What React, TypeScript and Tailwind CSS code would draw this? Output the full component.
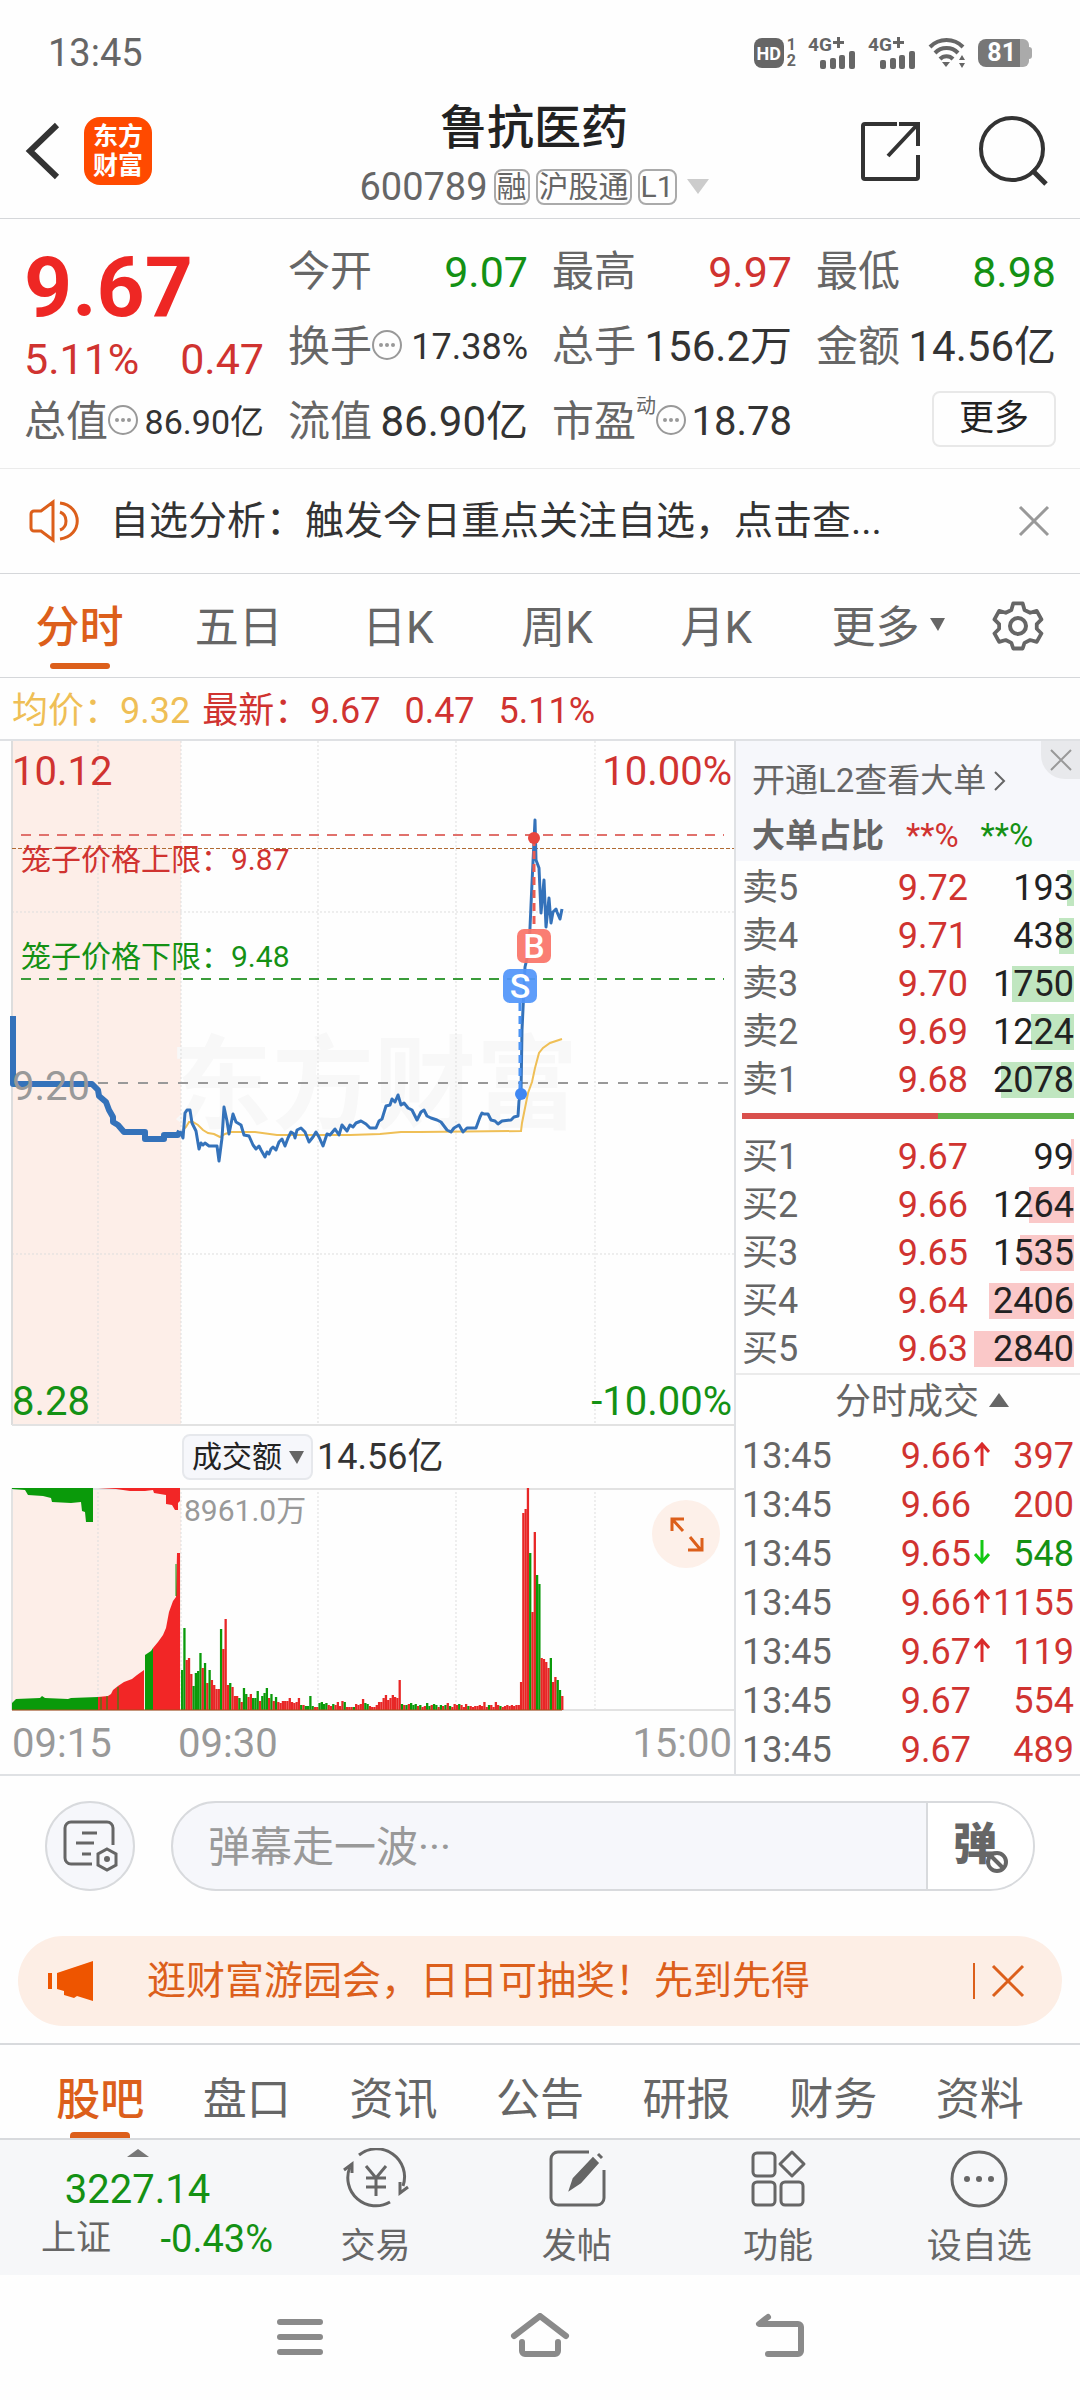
import { useState } from "react";
import clsx from "clsx";

const UP = "text-[#d03330]";
const DOWN = "text-[#149114]";

const chartTabs = ["分时", "五日", "日K", "周K", "月K", "更多"];
const infoTabs = ["股吧", "盘口", "资讯", "公告", "研报", "财务", "资料"];

const asks = [
  { label: "卖5", price: "9.72", qty: 193 },
  { label: "卖4", price: "9.71", qty: 438 },
  { label: "卖3", price: "9.70", qty: 1750 },
  { label: "卖2", price: "9.69", qty: 1224 },
  { label: "卖1", price: "9.68", qty: 2078 },
];

const bids = [
  { label: "买1", price: "9.67", qty: 99 },
  { label: "买2", price: "9.66", qty: 1264 },
  { label: "买3", price: "9.65", qty: 1535 },
  { label: "买4", price: "9.64", qty: 2406 },
  { label: "买5", price: "9.63", qty: 2840 },
];

const trades = [
  { time: "13:45", price: "9.66", dir: "up", qty: 397 },
  { time: "13:45", price: "9.66", dir: "", qty: 200 },
  { time: "13:45", price: "9.65", dir: "down", qty: 548 },
  { time: "13:45", price: "9.66", dir: "up", qty: 1155 },
  { time: "13:45", price: "9.67", dir: "up", qty: 119 },
  { time: "13:45", price: "9.67", dir: "", qty: 554 },
  { time: "13:45", price: "9.67", dir: "", qty: 489 },
];

const auctionLine =
  "13,275 13,343 92,343 98,349 99,355 106,361 109,369 113,376 113,381 118,384 124,391 145,391 145,398 164,398 164,394 178,394 180,390";

const priceLine =
  "180,390 183,397 185,372 187,369 190,369 192,382 196,390 199,408 201,402 203,404 205,402 209,405 217,405 219,420 222,397 224,366 227,380 229,393 233,373 236,381 241,384 244,394 249,395 253,404 256,408 259,405 261,409 265,416 267,411 269,413 271,408 273,406 276,409 279,401 282,398 285,405 288,397 291,391 294,393 295,397 297,389 301,387 305,391 309,401 313,396 316,391 319,396 323,405 327,393 330,394 335,388 339,394 342,384 347,390 350,384 353,386 356,382 361,380 366,383 370,387 376,387 379,380 382,378 386,365 390,364 392,358 395,361 398,354 401,364 404,362 408,367 412,369 417,379 421,371 424,369 427,375 431,377 437,379 441,381 447,389 451,391 454,387 459,384 463,391 467,387 476,387 480,376 482,372 484,373 488,373 491,379 495,380 498,383 502,380 511,379 514,376 518,375 519,360 521,352 522,289 525,226 529,209 532,142 535,79 536,119 539,127 541,172 544,139 546,186 549,157 551,182 553,171 556,168 557,171 560,178 562,168";

const averageLine =
  "183,389 186,386 189,381 193,381 198,384 203,389 208,392 214,393 220,396 225,393 231,391 255,391 277,394 300,394 350,394 380,393 401,391 420,391 521,390 522,382 528,352 532,341 535,327 539,312 543,307 550,302 562,298";

// one bar per minute from 09:30, negative = falling minute
const volumes = [
  -40, -82, 50, 52, 36, -24, -37, -39, -57, 42, -47, 27, -40, 30, 25, 21, 21, -81, 61, 91,
  25, -27, 23, 14, 14, -12, 8, -22, -16, 13, 16, -12, -12, -19, 9, -14, -17, -22, 12, -16,
  9, -13, 8, 7, 9, 9, 9, 12, 8, 7, 8, 12, -5, 5, -4, -4, -14, -4, 3, 3,
  -7, -8, -6, -7, 5, 4, -6, 5, 8, 4, 9, -8, 3, 3, 3, -3, 6, 5, 6, 11,
  -7, -6, 4, 3, 3, 5, 8, 8, 12, 15, 10, 12, 15, 13, 12, 30, -6, 5, -5, 6,
  -7, -5, -6, 4, -5, 3, 4, -7, -4, 5, -6, -5, 3, -5, 4, -5, 7, -4, 3, 6,
  5, -6, 5, 3, 6, -4, 4, 3, 4, 4, 5, 4, 8, 3, -5, 5, 3, 8, 5, -4,
  3, 4, 5, 4, 5, 4, 5, 5, 28, 197, 201, 222, -157, 98, 178, -135, -126, 52, 51, 48,
  42, -52, 28, 33, -30, -20, 14,
];

function StatusBar() {
  return (
    <div className="flex h-[88px] items-center justify-between pt-[18px] pr-12 pl-12 text-[#666]">
      <span className="text-[38px] leading-10">13:45</span>
      <div className="flex items-center gap-3">
        <div className="flex items-center gap-[3px]">
          <span className="flex h-[30px] w-[30px] shrink-0 items-center justify-center rounded-lg bg-[#666] text-[18px] font-bold text-white">HD</span>
          <span className="flex flex-col text-[16px] leading-4 font-bold">
            <span>1</span>
            <span>2</span>
          </span>
        </div>
        {[0, 1].map((sim) => (
          <div key={sim} className="relative h-8 w-12">
            <span className="absolute -top-1 left-0 text-[19px] leading-6 font-bold">4G</span>
            <svg viewBox="0 0 48 32" className="h-8 w-12" fill="#666">
              <path d="M29 0h3v4h4v3h-4v4h-3V7h-4V4h4z" />
              <rect x="12" y="23" width="6" height="9" rx="2" />
              <rect x="22" y="21" width="6" height="11" rx="2" />
              <rect x="31" y="18" width="6" height="14" rx="2" />
              <rect x="41" y="14" width="6" height="18" rx="2" />
            </svg>
          </div>
        ))}
        <svg viewBox="0 0 38 30" className="h-[30px] w-[38px]" fill="none" stroke="#666" strokeWidth="4">
          <path d="M2 9a23 23 0 0 1 33 0" />
          <path d="M7 15a16 16 0 0 1 23 0" />
          <path d="M12 21a9 9 0 0 1 13 0" />
          <path d="M18 29l-4-5h8z" fill="#666" stroke="none" />
          <path d="M34 17l3 5h-6zM34 30l3-5h-6z" fill="#666" stroke="none" />
        </svg>
        <div className="flex items-center">
          <span className="flex h-7 w-[42px] items-center justify-end rounded-l-lg bg-[#777] pr-1 text-[25px] font-bold text-white">81</span>
          <span className="h-7 w-[9px] rounded-r-md bg-[#aaa]" />
          <span className="h-3 w-[3px] rounded-r bg-[#aaa]" />
        </div>
      </div>
    </div>
  );
}

function Header() {
  return (
    <header className="flex h-[131px] items-center justify-between border-b border-[#d5d7da] px-6">
      <div className="flex flex-1 items-center gap-6 pb-1">
        <button aria-label="返回">
          <svg viewBox="0 0 36 58" className="h-[58px] w-9" fill="none" stroke="#333" strokeWidth="6">
            <path d="M33 3L6 29l27 26" />
          </svg>
        </button>
        <span className="flex h-[68px] w-[68px] flex-col items-center justify-center rounded-2xl bg-[#ff4a00] text-[25px] leading-[29px] font-bold text-white">
          <span>东方</span>
          <span>财富</span>
        </span>
      </div>
      <div className="flex flex-col items-center gap-[11px]">
        <h1 className="text-[47px] leading-[56px] font-medium text-[#222]">鲁抗医药</h1>
        <div className="flex items-center gap-[6px] text-[#666]">
          <span className="text-[38px] leading-10">600789</span>
          <span className="rounded-lg border-2 border-[#aaa] px-px text-[30px] leading-8">融</span>
          <span className="rounded-lg border-2 border-[#aaa] px-px text-[30px] leading-8">沪股通</span>
          <span className="rounded-lg border-2 border-[#aaa] px-px text-[30px] leading-8">L1</span>
          <svg viewBox="0 0 22 15" className="ml-1 h-[15px] w-[22px]" fill="#ccc">
            <path d="M0 0h22L11 15z" />
          </svg>
        </div>
      </div>
      <div className="flex flex-1 items-center justify-end gap-14 pr-2 pb-1 pl-1">
        <button aria-label="分享">
          <svg viewBox="0 0 62 62" className="h-[62px] w-[62px]" fill="none" stroke="#333" strokeWidth="4">
            <path d="M37 4H5a2 2 0 0 0-2 2v51a2 2 0 0 0 2 2h51a2 2 0 0 0 2-2V35" />
            <path d="M39 4h19v22M57 5L28 36" />
          </svg>
        </button>
        <button aria-label="搜索">
          <svg viewBox="0 0 70 70" className="h-[70px] w-[70px]" fill="none" stroke="#333" strokeWidth="4">
            <circle cx="34" cy="33" r="31" />
            <path d="M54 54l14 14" strokeWidth="5" />
          </svg>
        </button>
      </div>
    </header>
  );
}

function MoreDot() {
  return (
    <svg viewBox="0 0 30 30" className="mb-1 h-[30px] w-[30px] shrink-0" fill="#999">
      <circle cx="15" cy="15" r="14" fill="none" stroke="#999" strokeWidth="2" />
      <circle cx="9" cy="15" r="2" />
      <circle cx="15" cy="15" r="2" />
      <circle cx="21" cy="15" r="2" />
    </svg>
  );
}

type StatProps = { label: string; value: string; tone?: string; dot?: boolean; sup?: string; size?: string };

function Stat({ label, value, tone = "text-[#333]", dot, sup, size = "text-[42px]" }: StatProps) {
  return (
    <div className="flex h-[75px] items-center justify-between pt-[2px] whitespace-nowrap">
      <span className="flex items-center text-[42px] leading-[48px] text-[#666]">
        {label}
        {sup && <span className="self-start text-[20px] leading-4">{sup}</span>}
        {dot && <MoreDot />}
      </span>
      <span className={clsx(size, "leading-[48px]", tone)}>{value}</span>
    </div>
  );
}

function Quote() {
  return (
    <section className="grid grid-cols-4 gap-x-6 border-b border-[#ebebeb] px-6 pt-[14px] pb-[10px]">
      <div className="row-span-3">
        <div className="h-[102px] pt-1 text-[84px] leading-[102px] font-bold text-[#ee2724]">9.67</div>
        <div className={clsx("flex h-12 items-center justify-between text-[43px]", UP)}>
          <span>5.11%</span>
          <span>0.47</span>
        </div>
        <Stat label="总值" value="86.90亿" dot size="text-[34px]" />
      </div>
      <Stat label="今开" value="9.07" tone={DOWN} size="text-[43px]" />
      <Stat label="最高" value="9.97" tone={UP} size="text-[43px]" />
      <Stat label="最低" value="8.98" tone={DOWN} size="text-[43px]" />
      <Stat label="换手" value="17.38%" dot size="text-[36px]" />
      <Stat label="总手" value="156.2万" />
      <Stat label="金额" value="14.56亿" />
      <Stat label="流值" value="86.90亿" />
      <Stat label="市盈" value="18.78" sup="动" dot size="text-[40px]" />
      <div className="flex items-center justify-end pb-1">
        <button className="h-14 w-[124px] rounded-lg border-2 border-[#e8e8e8] text-[35px] leading-[48px] text-[#222]">更多</button>
      </div>
    </section>
  );
}

function Notice() {
  return (
    <div className="flex h-[105px] items-center border-b border-[#d5d7da] pr-[30px] pl-7">
      <svg viewBox="0 0 54 44" className="h-11 w-[54px]" fill="none" stroke="#dc5f1b" strokeWidth="3">
        <path d="M25 3v38L13 32H6a3 3 0 0 1-3-3V15a3 3 0 0 1 3-3h7z" />
        <path d="M32 13c8 3 8 15 0 18M32 4c23 3 23 33 0 36" />
      </svg>
      <p className="ml-7 flex-1 truncate text-[39px] leading-[48px] text-[#333]">自选分析：触发今日重点关注自选，点击查...</p>
      <button aria-label="关闭提示">
        <svg viewBox="0 0 32 32" className="h-8 w-8" fill="none" stroke="#999" strokeWidth="3">
          <path d="M2 2l28 28M30 2L2 30" />
        </svg>
      </button>
    </div>
  );
}

function ChartTabs() {
  const [active, setActive] = useState("分时");
  return (
    <nav className="flex h-[104px] items-center border-b border-[#d5d7da]">
      {chartTabs.map((tab) => (
        <button
          key={tab}
          onClick={() => setActive(tab)}
          className={clsx("relative h-full flex-1 pt-1 text-[44px]", tab === active ? "font-medium text-[#dc5f1b]" : "text-[#666]")}
        >
          {tab}
          {tab === "更多" && (
            <svg viewBox="0 0 15 13" className="absolute top-[44px] right-[10px] h-[13px] w-[15px]" fill="#666">
              <path d="M0 0h15L8 13z" />
            </svg>
          )}
          {tab === active && <span className="absolute bottom-2 left-1/2 h-[6px] w-[60px] -translate-x-1/2 rounded bg-[#dc5f1b]" />}
        </button>
      ))}
      <button aria-label="设置" className="flex w-[125px] justify-center">
        <svg viewBox="0 0 52 52" className="h-[52px] w-[52px]" fill="none" stroke="#666" strokeWidth="4" strokeLinejoin="round">
          <path d="M21 2h10l2 7 6 3 7-2 5 9-5 5v5l5 5-5 9-7-2-6 3-2 6H21l-2-6-6-3-7 2-5-9 5-5v-5l-5-5 5-9 7 2 6-3z" transform="translate(1.5 1.5) scale(.94)" />
          <circle cx="26" cy="26" r="8" />
        </svg>
      </button>
    </nav>
  );
}

function PriceChart() {
  return (
    <svg viewBox="0 0 734 685" className="h-auto w-full" fill="none">
      <rect x="12" y="0" width="169" height="684" fill="#fdeee8" />
      <text x="170" y="380" fontSize="102" fontWeight="700" fill="#f8f8f8">东方财富</text>
      <g stroke="#ddd" strokeWidth="1" strokeDasharray="2 2">
        <path d="M98 0v684M181 0v684M318 0v684M456 0v684M595 0v684" />
        <path d="M12 171h722M12 513h722" />
      </g>
      <path d="M12 0v684" stroke="#ddd" strokeWidth="2" />
      <path d="M12 684h722" stroke="#e2e2e2" strokeWidth="2" />
      <path d="M98 342h636" stroke="#999" strokeWidth="2" strokeDasharray="10 10" />
      <path d="M21 94h703" stroke="#e0716c" strokeWidth="2" strokeDasharray="10 8" />
      <path d="M12 107.5h722" stroke="#b06a33" strokeWidth="1" strokeDasharray="4 2" />
      <path d="M21 238h703" stroke="#3a9c3a" strokeWidth="2" strokeDasharray="10 8" />

      <polyline points={averageLine} stroke="#efbf56" strokeWidth="2" />
      <polyline points={auctionLine} stroke="#3472ba" strokeWidth="6" strokeLinejoin="round" />
      <polyline points={priceLine} stroke="#3472ba" strokeWidth="3" strokeLinejoin="round" />

      <path d="M534 97v92" stroke="#ea5c52" strokeWidth="3" strokeDasharray="8 5" />
      <circle cx="534" cy="97" r="6" fill="#e8463f" />
      <path d="M520 262v91" stroke="#4b94f5" strokeWidth="3" strokeDasharray="8 5" />
      <circle cx="521" cy="353" r="6" fill="#3f87f3" />
      <rect x="517" y="188" width="34" height="34" rx="7" fill="#fa7468" fillOpacity=".93" />
      <text x="534" y="217" fontSize="34" fontWeight="500" textAnchor="middle" fill="#fff">B</text>
      <rect x="503" y="228" width="34" height="34" rx="7" fill="#5296fa" fillOpacity=".93" />
      <text x="520" y="257" fontSize="34" fontWeight="500" textAnchor="middle" fill="#fff">S</text>

      <g fontSize="40">
        <text x="12" y="44" fill="#d03330">10.12</text>
        <text x="732" y="44" fill="#d03330" textAnchor="end">10.00%</text>
        <text x="12" y="359" fill="#999">9.20</text>
        <text x="12" y="674" fill="#149114">8.28</text>
        <text x="732" y="674" fill="#149114" textAnchor="end">-10.00%</text>
      </g>
      <text x="21" y="129" fontSize="30" fill="#d03330">笼子价格上限：9.87</text>
      <text x="21" y="226" fontSize="30" fill="#149114">笼子价格下限：9.48</text>
    </svg>
  );
}

function VolumeChart() {
  return (
    <svg viewBox="0 0 734 223" className="h-auto w-full" fill="none">
      <rect x="12" y="0" width="169" height="222" fill="#fdeee8" />
      <path d="M98 0v222M181 0v222M318 0v222M456 0v222M595 0v222" stroke="#ddd" strokeDasharray="2 2" />
      <path d="M12 0v222M12 1h722M12 222h722" stroke="#e2e2e2" strokeWidth="2" />

      {/* call auction: matched volume below, unmatched hanging from the top */}
      <path d="M12 222v-7l4-4 24-1 2-2 3 2 23 1 3-1 27-1v13z" fill="#0a9a0a" />
      <path d="M98 222v-13l10-1 3-2 2-4 5-4 6-4 8-3 5-4 7-5v40z" fill="#f22626" />
      <path d="M145 222v-55l6-4 2-3v62z" fill="#0a9a0a" />
      <path d="M153 222v-62l5-6 5-7 3-7 3-16 4-11 3-4 1-44h3v157z" fill="#f22626" />
      <path d="M101 222v-13M107 222v-14M118 222v-23" stroke="#0a9a0a" strokeWidth="1" />
      <path d="M176 108v-32" stroke="#0a9a0a" strokeWidth="1" />
      <path d="M12 0h81v34h-7l-1-10-3-1-1-9-10 1-19-1-1-4-8-2-15-1-3-5-13-1z" fill="#0a9a0a" />
      <path d="M98 0h82v13l-2 2v7h-3l-3-5-6-1v-9l-6-1-6-1-1-3-8 1h-15l-14-2-18-1z" fill="#f22626" />

      {volumes.map((v, i) => (
        <rect key={i} x={181 + i * 2.29} y={222 - Math.abs(v)} width="2.3" height={Math.abs(v)} fill={v > 0 ? "#e82626" : "#0a9a0a"} />
      ))}
      <path d="M12 222h550" stroke="#a84a18" strokeWidth="1" />

      <text x="184" y="33" fontSize="30" fill="#999">8961.0万</text>
      <circle cx="686" cy="46" r="34" fill="#fdf0e9" />
      <path d="M684 31h-12v12M673 32l10 11M702 50v12h-14M700 61l-10-12" stroke="#dc5f1b" strokeWidth="3" />
    </svg>
  );
}

type Level = { label: string; price: string; qty: number };

function BookTable({ rows, barClass, name }: { rows: Level[]; barClass: string; name: string }) {
  return (
    <table className="w-full text-[36px] leading-10" aria-label={name}>
      <tbody>
        {rows.map((row) => (
          <tr key={row.label} className="h-12">
            <td className="p-0 pl-[6px] text-[#666]">{row.label}</td>
            <td className={clsx("w-24 p-0 text-right", UP)}>{row.price}</td>
            <td className="relative w-[112px] p-0 pr-[6px] text-right text-[#222]">
              <span className={clsx("absolute top-[6px] right-[6px] h-9", barClass)} style={{ width: Math.round(row.qty / 28.4) }} />
              <span className="relative">{row.qty}</span>
            </td>
          </tr>
        ))}
      </tbody>
    </table>
  );
}

function OrderBook() {
  return (
    <aside className="border-l-2 border-[#dfe1e4]">
      <div className="relative flex h-[120px] flex-col justify-center gap-[15px] bg-[#f6f7fb] pt-[14px] pl-4 text-[33px] leading-10 text-[#666]">
        <a href="#l2" className="flex items-center gap-2 whitespace-nowrap">
          开通L2查看大单
          <svg viewBox="0 0 12 20" className="h-5 w-3" fill="none" stroke="#666" strokeWidth="2">
            <path d="M1 1l9 9-9 9" />
          </svg>
        </a>
        <p className="flex gap-[22px] whitespace-nowrap">
          <strong>大单占比</strong>
          <span className={UP}>**%</span>
          <span className={DOWN}>**%</span>
        </p>
        <button aria-label="关闭" className="absolute top-0 right-0 flex h-[38px] w-[39px] items-center justify-center rounded-bl-3xl bg-[#e8e9ec]">
          <svg viewBox="0 0 22 22" className="h-[22px] w-[22px]" fill="none" stroke="#999" strokeWidth="2">
            <path d="M1 1l20 20M21 1L1 21" />
          </svg>
        </button>
      </div>
      <div className="pt-[3px]">
        <BookTable rows={asks} barClass="bg-[#c0e6c0]" name="卖盘" />
      </div>
      <div className="mx-[6px] mt-[9px] mb-[14px] flex h-[6px] bg-[#61b34c]">
        <span className="w-[59%] bg-[#d9504c]" />
      </div>
      <BookTable rows={bids} barClass="bg-[#fac8c8]" name="买盘" />
      <div className="flex h-[58px] items-center justify-center gap-[10px] border-t-2 border-[#ebebeb] pb-[2px] pl-7 text-[36px] text-[#666]">
        分时成交
        <svg viewBox="0 0 20 14" className="mb-1 h-[14px] w-5" fill="#666">
          <path d="M10 0l10 14H0z" />
        </svg>
      </div>
      <table className="w-full text-[36px] leading-10" aria-label="分时成交">
        <tbody>
          {trades.map((trade, i) => (
            <tr key={i} className="h-[49px]">
              <td className="p-0 pl-[6px] text-[#666]">{trade.time}</td>
              <td className={clsx("w-[72px] p-0 text-right", UP)}>{trade.price}</td>
              <td className="w-[22px] p-0">
                {trade.dir && (
                  <svg
                    viewBox="0 0 16 24"
                    className={clsx("mx-auto mb-1 h-6 w-4", trade.dir === "down" && "rotate-180")}
                    fill="none"
                    stroke={trade.dir === "up" ? "#d92b2b" : "#14c814"}
                    strokeWidth="3"
                  >
                    <path d="M8 24V3M1 10l7-8 7 8" />
                  </svg>
                )}
              </td>
              <td className={clsx("w-[86px] p-0 pr-[6px] text-right", trade.dir === "down" ? DOWN : UP)}>{trade.qty}</td>
            </tr>
          ))}
        </tbody>
      </table>
    </aside>
  );
}

function Market() {
  return (
    <>
      <div className="flex h-[63px] items-center border-b-2 border-[#dfe1e4] pt-1 pl-3 text-[36px] whitespace-pre">
        <span className="mr-3 text-[#efbf56]">均价：9.32</span>
        <span className={clsx("flex gap-6", UP)}>
          <span>最新：9.67</span>
          <span>0.47</span>
          <span>5.11%</span>
        </span>
      </div>
      <section className="grid grid-cols-[minmax(0,734fr)_minmax(0,346fr)] border-b-2 border-[#dfe1e4]">
        <div className="flex flex-col">
          <PriceChart />
          <div className="flex h-[62px] items-center gap-1 pl-[182px]">
            <span className="relative flex items-center">
              <select aria-label="指标" className="h-[46px] w-[131px] appearance-none rounded-lg border-2 border-[#e6e8ec] bg-[#f6f7fb] pl-2 text-[30px] leading-10 text-[#222]">
                <option>成交额</option>
                <option>成交量</option>
              </select>
              <svg viewBox="0 0 15 13" className="pointer-events-none absolute right-[9px] h-[13px] w-[15px]" fill="#666">
                <path d="M0 0h15L8 13z" />
              </svg>
            </span>
            <span className="text-[36px] leading-10 text-[#333]">14.56亿</span>
          </div>
          <VolumeChart />
          <div className="flex h-[62px] items-center pt-1 pr-[2px] pl-3 text-[40px] text-[#999]">
            <span className="w-[166px]">09:15</span>
            <span className="flex-1">09:30</span>
            <span>15:00</span>
          </div>
        </div>
        <OrderBook />
      </section>
    </>
  );
}

function Danmaku() {
  return (
    <div className="flex gap-9 px-[45px] pt-[25px]">
      <button aria-label="弹幕设置" className="flex h-[90px] w-[90px] items-center justify-center rounded-full border-2 border-[#d8dadd] bg-[#f6f7fb]">
        <svg viewBox="0 0 56 52" className="h-[52px] w-14" fill="none" stroke="#666" strokeWidth="3">
          <path d="M30 44H9a6 6 0 0 1-6-6V8a6 6 0 0 1 6-6h36a6 6 0 0 1 6 6v17" />
          <path d="M20 13h15M14 23h18M20 34h9" />
          <path d="M45 29l9 5v11l-9 5-9-5V34z" />
          <circle cx="45" cy="39" r="3" fill="#666" stroke="none" />
        </svg>
      </button>
      <div className="flex h-[90px] flex-1 overflow-hidden rounded-full border-2 border-[#d8dadd] bg-[#f6f7fb]">
        <input
          aria-label="弹幕"
          placeholder="弹幕走一波···"
          className="min-w-0 flex-1 pt-[2px] pl-[35px] text-[42px] text-[#333] placeholder:text-[#999]"
        />
        <button aria-label="关闭弹幕" className="relative w-[107px] border-l-2 border-[#d8dadd] bg-white pb-[2px] text-left">
          <span className="pl-[25px] text-[44px] leading-[48px] font-black text-[#666]">弹</span>
          <svg viewBox="0 0 24 24" className="absolute right-[24px] bottom-[15px] h-6 w-6" fill="#fff" stroke="#666" strokeWidth="4">
            <circle cx="12" cy="12" r="9" />
            <path d="M6 6l12 12" />
          </svg>
        </button>
      </div>
    </div>
  );
}

function Promo() {
  return (
    <div className="mx-[18px] mt-[45px] mb-[17px] flex h-[90px] items-center rounded-full bg-[#fdeee5] pr-[37px] pl-[30px] text-[#dc5f1b]">
      <svg viewBox="0 0 46 40" className="h-10 w-[46px]" fill="#ee5500">
        <path d="M0 12h4v16H0zM9 12L45 0v40l-16-5-3 2-10-3v-4l-7-2z" />
      </svg>
      <a href="#promo" className="ml-[53px] flex-1 text-[39px] leading-[48px]">逛财富游园会，日日可抽奖！先到先得</a>
      <button aria-label="关闭活动" className="flex items-center border-l-2 border-[#dc5f1b] pl-4">
        <svg viewBox="0 0 34 36" className="h-9 w-[34px]" fill="none" stroke="#dc5f1b" strokeWidth="3">
          <path d="M2 3l30 30M32 3L2 33" />
        </svg>
      </button>
    </div>
  );
}

function InfoTabs() {
  const [active, setActive] = useState("股吧");
  return (
    <nav className="flex h-[97px] border-y-2 border-[#d8dadd] px-[27px]">
      {infoTabs.map((tab) => (
        <button
          key={tab}
          onClick={() => setActive(tab)}
          className={clsx("relative h-full flex-1 pt-4 text-[44px] leading-[48px]", tab === active ? "font-medium text-[#dc5f1b]" : "text-[#666]")}
        >
          {tab}
          {tab === active && <span className="absolute bottom-0 left-1/2 h-[6px] w-[60px] -translate-x-1/2 rounded-t bg-[#dc5f1b]" />}
        </button>
      ))}
    </nav>
  );
}

const actions = [
  {
    label: "交易",
    icon: (
      <>
        <path d="M17 7a28 28 0 0 1 44 31M48 54A28 28 0 0 1 8 19" />
        <path d="M2 22l8-6v9M66 39l-8 6V34" />
        <path d="M24 18l10 12 10-12M34 30v18M24 30h20M24 39h20" />
      </>
    ),
  },
  {
    label: "发帖",
    icon: (
      <>
        <path d="M46 4H15a7 7 0 0 0-7 7v39a7 7 0 0 0 7 7h39a7 7 0 0 0 7-7V22" />
        <path d="M28 40l3-9L50 11l4 4-17 19zM55 6l4 4" fill="#666" />
      </>
    ),
  },
  {
    label: "功能",
    icon: (
      <>
        <rect x="9" y="5" width="22" height="23" rx="4" />
        <rect x="9" y="34" width="22" height="23" rx="4" />
        <rect x="37" y="34" width="22" height="23" rx="4" />
        <path d="M48 4l12 12-12 12-12-12z" strokeLinejoin="round" />
      </>
    ),
  },
  {
    label: "设自选",
    icon: (
      <>
        <circle cx="34" cy="31" r="27" />
        <g fill="#666" stroke="none">
          <circle cx="22" cy="31" r="3" />
          <circle cx="34" cy="31" r="3" />
          <circle cx="46" cy="31" r="3" />
        </g>
      </>
    ),
  },
];

function BottomBar() {
  return (
    <footer className="flex h-[135px] bg-[#f6f7f9]">
      <a href="#index" className="flex w-[275px] flex-col items-center pt-[9px]">
        <svg viewBox="0 0 22 8" className="h-2 w-[22px]" fill="#777">
          <path d="M11 0l11 8H0z" />
        </svg>
        <span className={clsx("mt-[9px] text-[40px] leading-[48px]", DOWN)}>3227.14</span>
        <span className="mt-[2px] flex w-full items-center justify-between pr-[2px] pl-[41px] leading-[46px]">
          <span className="text-[35px] text-[#666]">上证</span>
          <span className={clsx("text-[38px]", DOWN)}>-0.43%</span>
        </span>
      </a>
      {actions.map((action) => (
        <button key={action.label} className="flex flex-1 flex-col items-center pt-2 text-[35px] leading-[46px] text-[#666]">
          <svg viewBox="0 0 68 62" className="mb-[14px] h-[62px] w-[68px]" fill="none" stroke="#666" strokeWidth="3">
            {action.icon}
          </svg>
          {action.label}
        </button>
      ))}
    </footer>
  );
}

function SystemNav() {
  return (
    <div className="flex h-[126px] items-center justify-center gap-[180px] pb-[2px]">
      <button aria-label="最近任务">
        <svg viewBox="0 0 60 48" className="h-12 w-[60px]" stroke="#8a8a8a" strokeWidth="6" strokeLinecap="round">
          <path d="M10 9h40M10 24h40M10 39h40" />
        </svg>
      </button>
      <button aria-label="主屏幕">
        <svg viewBox="0 0 60 48" className="h-12 w-[60px]" fill="none" stroke="#8a8a8a" strokeWidth="6" strokeLinecap="round">
          <path d="M4 23L30 3l26 20" />
          <path d="M12 29v9a3 3 0 0 0 3 3h30a3 3 0 0 0 3-3v-9" />
        </svg>
      </button>
      <button aria-label="返回上一页">
        <svg viewBox="0 0 60 48" className="h-12 w-[60px]" fill="none" stroke="#8a8a8a" strokeWidth="6" strokeLinecap="round" strokeLinejoin="round">
          <path d="M18 4l-9 7h39a3 3 0 0 1 3 3v24a3 3 0 0 1-3 3H18" />
        </svg>
      </button>
    </div>
  );
}

export default function App() {
  return (
    <div className="min-h-screen bg-[#fefefe] font-[Roboto,'Noto_Sans_CJK_SC',sans-serif]">
      <StatusBar />
      <Header />
      <main>
        <Quote />
        <Notice />
        <ChartTabs />
        <Market />
        <Danmaku />
        <Promo />
        <InfoTabs />
      </main>
      <BottomBar />
      <SystemNav />
    </div>
  );
}
